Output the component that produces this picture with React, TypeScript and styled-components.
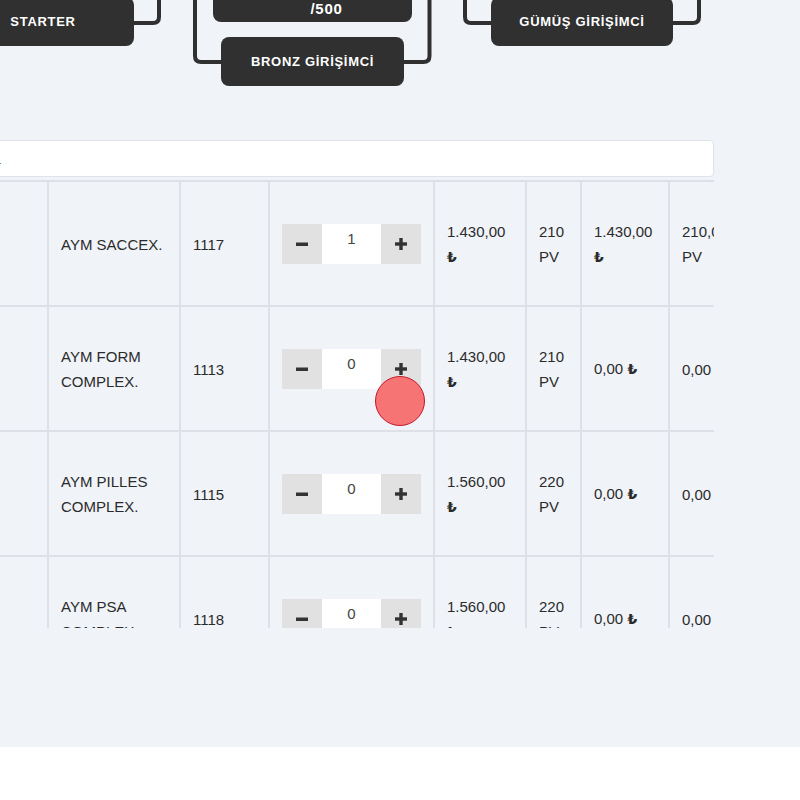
import React from "react";
import styled, { createGlobalStyle } from "styled-components";

type Product = {
    name: string;
    code: string;
    qty: number;
    price: string;
    pv: string;
    total: string;
    totalPv: string;
}

const products: Product[] = [
    { name: 'AYM SACCEX.', code: '1117', qty: 1, price: '1.430,00', pv: '210', total: '1.430,00', totalPv: '210,00' },
    { name: 'AYM FORM COMPLEX.', code: '1113', qty: 0, price: '1.430,00', pv: '210', total: '0,00', totalPv: '0,00' },
    { name: 'AYM PILLES COMPLEX.', code: '1115', qty: 0, price: '1.560,00', pv: '220', total: '0,00', totalPv: '0,00' },
    { name: 'AYM PSA COMPLEX.', code: '1118', qty: 0, price: '1.560,00', pv: '220', total: '0,00', totalPv: '0,00' },
]

const MinusIcon = () => (
    <svg width="12" height="12" viewBox="0 0 12 12">
        <rect x="0" y="4.5" width="12" height="3.5" fill="#333" />
    </svg>
)

const PlusIcon = () => (
    <svg width="12" height="12" viewBox="0 0 12 12">
        <rect x="0" y="4.3" width="12" height="3.4" fill="#333" />
        <rect x="4.3" y="0" width="3.4" height="12" fill="#333" />
    </svg>
)

const Lira = () => <LiraSign>₺</LiraSign>

export default function App() {
    return (
        <>
            <GlobalStyle />
            <Section>
                <TreeCanvas>
                    <Connectors width="800" height="100" viewBox="0 0 800 100">
                        <path d="M 134 23 H 153 Q 159 23 159 17 V -10" />
                        <path d="M 195 -10 V 56 Q 195 62 201 62 H 222" />
                        <path d="M 429.5 -10 V 56 Q 429.5 62 423.5 62 H 403" />
                        <path d="M 465 -10 V 17 Q 465 23 471 23 H 492" />
                        <path d="M 672 23 H 693 Q 699 23 699 17 V -10" />
                    </Connectors>
                    <Node $x={-48} $y={-3} $w={182} $h={49}>STARTER</Node>
                    <Node $x={213} $y={-40} $w={199} $h={62} $bottom>/500</Node>
                    <Node $x={221} $y={37} $w={183} $h={49}>BRONZ GİRİŞİMCİ</Node>
                    <Node $x={491} $y={-3} $w={182} $h={49}>GÜMÜŞ GİRİŞİMCİ</Node>
                </TreeCanvas>

                <Content>
                    <SearchInput placeholder="Ürün adı ile ara" />
                    <TableScroll>
                        <Table>
                            {products.map((item) => (
                                <Row key={item.code}>
                                    <Cell />
                                    <Cell>{item.name}</Cell>
                                    <Cell>{item.code}</Cell>
                                    <Cell>
                                        <Stepper>
                                            <StepButton><MinusIcon /></StepButton>
                                            <QtyInput value={item.qty} readOnly />
                                            <StepButton><PlusIcon /></StepButton>
                                        </Stepper>
                                    </Cell>
                                    <Cell><span>{item.price} <Lira /></span></Cell>
                                    <Cell>{item.pv} PV</Cell>
                                    <Cell><span>{item.total} <Lira /></span></Cell>
                                    <Cell>{item.totalPv} PV</Cell>
                                </Row>
                            ))}
                        </Table>
                    </TableScroll>
                </Content>

                <ClickMarker />
            </Section>
        </>
    )
}

const GlobalStyle = createGlobalStyle`
    body {
        margin: 0;
        background: #ffffff;
        font-family: "Liberation Sans", Arial, sans-serif;
    }
`

const Section = styled.div`
    position: relative;
    background: #f0f3f8;
    padding-bottom: 119px;
    overflow: hidden;
`

const TreeCanvas = styled.div`
    position: relative;
    height: 100px;
`

const Connectors = styled.svg`
    position: absolute;
    left: 0;
    top: 0;
    overflow: visible;

    path {
        fill: none;
        stroke: #303030;
        stroke-width: 4;
    }
`

type NodeProps = {
    $x: number;
    $y: number;
    $w: number;
    $h: number;
    $bottom?: boolean;
}

const Node = styled.div<NodeProps>`
    position: absolute;
    left: ${({ $x }) => $x}px;
    top: ${({ $y }) => $y}px;
    width: ${({ $w }) => $w}px;
    height: ${({ $h }) => $h}px;
    box-sizing: border-box;
    background: #303030;
    border-radius: 8px;
    display: flex;
    justify-content: center;
    align-items: ${({ $bottom }) => ($bottom ? 'flex-end' : 'center')};
    padding: ${({ $bottom }) => ($bottom ? '0 0 4px 28px' : '0')};
    color: #ffffff;
    font-weight: 700;
    font-size: ${({ $bottom }) => ($bottom ? '15px' : '13px')};
    line-height: 18px;
    letter-spacing: 0.7px;
`

const Content = styled.div`
    margin-left: -120px;
    margin-right: 86px;
    margin-top: 40px;
`

const SearchInput = styled.input`
    display: block;
    width: 100%;
    height: 37px;
    box-sizing: border-box;
    border: 1px solid #dfe3e8;
    border-radius: 4px;
    background: #ffffff;
    padding: 0 12px 0 17px;
    font-family: "Liberation Sans", Arial, sans-serif;
    font-size: 15px;
    outline: none;

    &::placeholder {
        color: #4a4f55;
    }
`

const TableScroll = styled.div`
    margin-top: 3px;
    height: 448px;
    overflow: hidden;
`

const Table = styled.div`
    width: max-content;
    border-top: 2px solid #dde1e7;
`

const Row = styled.div`
    display: grid;
    grid-template-columns: 167px 132px 89px 165px 92px 55px 88px 86px;
    height: 125px;
    box-sizing: border-box;
    border-bottom: 2px solid #dde1e7;
`

const Cell = styled.div`
    display: flex;
    align-items: center;
    box-sizing: border-box;
    border-left: 2px solid #dde1e7;
    padding: 1px 12px 0;
    color: #2b2b2b;
    font-size: 15px;
    line-height: 25px;
`

const LiraSign = styled.span`
    font-family: "DejaVu Sans", sans-serif;
    font-weight: 700;
    font-size: 14px;
`

const Stepper = styled.div`
    display: flex;
    height: 40px;
`

const StepButton = styled.div`
    width: 40px;
    display: flex;
    align-items: center;
    justify-content: center;
    background: #e1e1e1;
`

const QtyInput = styled.input`
    width: 59px;
    height: 40px;
    box-sizing: border-box;
    border: none;
    padding: 0 0 12px;
    background: #ffffff;
    text-align: center;
    font-family: "Liberation Sans", Arial, sans-serif;
    font-size: 15px;
    color: #444;
    outline: none;
`

const ClickMarker = styled.div`
    position: absolute;
    left: 375px;
    top: 376px;
    width: 50px;
    height: 50px;
    box-sizing: border-box;
    border-radius: 50%;
    background: #f77474;
    border: 1px solid #c4172a;
`
